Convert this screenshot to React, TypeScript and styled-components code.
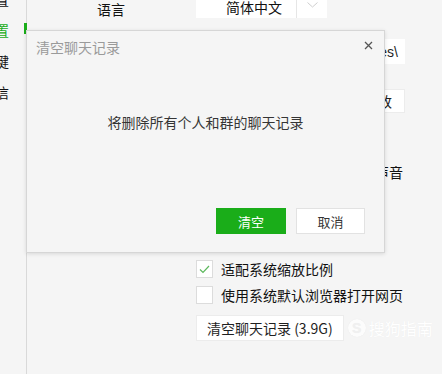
import React from "react";
import styled, { createGlobalStyle } from "styled-components";

const GlobalStyle = createGlobalStyle`
  html, body {
    margin: 0;
    padding: 0;
    background: #f5f5f5;
    overflow: hidden;
  }
  body {
    font-family: "Noto Sans CJK SC", "Microsoft YaHei", sans-serif;
    font-size: 14px;
    color: #1f1f1f;
  }
`;

const Window = styled.div`
  display: flex;
  width: 442px;
  height: 374px;
  background: #f5f5f5;
  overflow: hidden;
`;

const Sidebar = styled.div`
  position: relative;
  width: 26px;
  flex-shrink: 0;
  border-right: 1px solid #d9d9d9;
`;

const SideList = styled.div`
  display: flex;
  flex-direction: column;
  margin-top: -17px;
  overflow: hidden;
`;

const SideItem = styled.div<{ $active?: boolean }>`
  display: flex;
  justify-content: flex-end;
  align-items: center;
  height: 31px;
  padding-right: 17px;
  white-space: nowrap;
  color: ${({ $active }) => ($active ? "#1aad19" : "#111")};
`;

const ActiveMark = styled.div`
  position: absolute;
  left: 24px;
  top: 23px;
  width: 3px;
  height: 11px;
  background: #1aad19;
`;

const Main = styled.div`
  position: relative;
  flex: 1;
`;

const Content = styled.div`
  display: flex;
  flex-direction: column;
  margin-top: -10px;
`;

const Row = styled.div<{ $mt?: number; $h: number }>`
  display: grid;
  grid-template-columns: 169px 1fr;
  align-items: center;
  margin-top: ${({ $mt }) => $mt ?? 0}px;
  height: ${({ $h }) => $h}px;
`;

const Label = styled.div`
  padding: 9px 0 0 70px;
  line-height: 20px;
  color: #111;
`;

const Select = styled.div`
  display: flex;
  width: 131px;
  height: 26px;
  background: #fff;
  box-sizing: border-box;
`;

const SelectValue = styled.div`
  width: 101px;
  padding: 5px 0 0 30px;
  box-sizing: border-box;
  line-height: 20px;
  color: #111;
  border-right: 1px solid #e6e6e6;
`;

const SelectArrow = styled.div`
  flex: 1;
  display: flex;
  justify-content: center;
  padding-top: 10px;
`;

const PathBox = styled.div`
  width: 209px;
  height: 25px;
  background: #fff;
  display: flex;
  align-items: center;
  justify-content: flex-end;
  overflow: hidden;
  white-space: nowrap;
  padding-right: 7px;
  box-sizing: border-box;
  font-family: "Liberation Sans", Arial, sans-serif;
`;

const ButtonPair = styled.div`
  width: 209px;
  display: flex;
  justify-content: space-between;
`;

const PlainButton = styled.div<{ $w?: number; $h?: number }>`
  display: flex;
  align-items: center;
  justify-content: center;
  width: ${({ $w }) => ($w ? `${$w}px` : "auto")};
  height: ${({ $h }) => $h ?? 24}px;
  padding: 0 ${({ $w }) => ($w ? 0 : 10)}px;
  background: #fff;
  border: 1px solid #ececec;
  box-sizing: border-box;
  color: #1f1f1f;
  white-space: nowrap;
`;

const CheckLine = styled.label`
  display: flex;
  align-items: center;
  gap: 8px;
  white-space: nowrap;
  color: #111;
`;

const Box = styled.span`
  display: flex;
  align-items: center;
  justify-content: center;
  width: 17px;
  height: 18px;
  background: #fff;
  border: 1px solid #dcdcdc;
  box-sizing: border-box;
`;

const ClearLine = styled.div`
  display: flex;
  align-items: center;
  gap: 4px;
`;

const Watermark = styled.div`
  display: flex;
  align-items: center;
  gap: 3px;
  color: #ffffff;
  font-size: 16px;
  text-shadow: 0 0 1px rgba(0, 0, 0, 0.05);
`;

const WaterS = styled.span`
  display: flex;
  align-items: center;
  justify-content: center;
  width: 18px;
  height: 18px;
  border-radius: 50%;
  background: #fcfcfc;
  color: #f0f0f0;
  box-shadow: 0 0 1px rgba(0, 0, 0, 0.08);
  font-family: "Liberation Sans", Arial, sans-serif;
  font-weight: bold;
  font-size: 14px;
`;

/* dialog */

const Dialog = styled.div`
  position: absolute;
  left: -1px;
  top: 30px;
  width: 359px;
  height: 223px;
  box-sizing: border-box;
  display: flex;
  flex-direction: column;
  background: #f5f5f5;
  border: 1px solid #d6d6d6;
  box-shadow: 0 1px 4px rgba(0, 0, 0, 0.12);
`;

const DialogHead = styled.div`
  display: flex;
  align-items: center;
  justify-content: space-between;
  height: 32px;
  padding: 0 11px 0 9px;
`;

const DialogTitle = styled.div`
  color: #9a9a9a;
`;

const Close = styled.div`
  display: flex;
  width: 9px;
  height: 9px;
  margin-top: -4px;
`;

const Message = styled.div`
  margin-top: 49px;
  line-height: 20px;
  text-align: center;
  color: #353535;
`;

const DialogFoot = styled.div`
  margin-top: auto;
  display: flex;
  justify-content: flex-end;
  gap: 10px;
  padding: 0 19px 18px 0;
`;

const DialogButton = styled.div<{ $primary?: boolean }>`
  display: flex;
  align-items: center;
  justify-content: center;
  width: ${({ $primary }) => ($primary ? 70 : 69)}px;
  height: 26px;
  box-sizing: border-box;
  font-size: 13px;
  background: ${({ $primary }) => ($primary ? "#1aad19" : "#fff")};
  color: ${({ $primary }) => ($primary ? "#fff" : "#353535")};
  border: 1px solid ${({ $primary }) => ($primary ? "#1aad19" : "#e2e2e2")};
`;

const sideItems = ["帐号设置", "通用设置", "快捷按键", "关于微信"];

const Check = ({ on, text }: { on?: boolean; text: string }) => (
  <CheckLine>
    <Box>
      {on && (
        <svg width="11" height="9" viewBox="0 0 11 9">
          <polyline points="1,4.5 4,7.5 10,1" fill="none" stroke="#5cb85c" strokeWidth="1.2" />
        </svg>
      )}
    </Box>
    {text}
  </CheckLine>
);

export default function App() {
  return (
    <Window>
      <GlobalStyle />
      <Sidebar>
        <SideList>
          {sideItems.map((s, i) => (
            <SideItem key={s} $active={i === 1}>
              {s}
            </SideItem>
          ))}
        </SideList>
        <ActiveMark />
      </Sidebar>

      <Main>
        <Content>
          <Row $h={26}>
            <Label>语言</Label>
            <Select>
              <SelectValue>简体中文</SelectValue>
              <SelectArrow>
                <svg width="11" height="6" viewBox="0 0 11 6">
                  <polyline points="0.5,0.5 5.5,5 10.5,0.5" fill="none" stroke="#cfcfcf" strokeWidth="1" />
                </svg>
              </SelectArrow>
            </Select>
          </Row>
          <Row $mt={23} $h={25}>
            <span />
            <PathBox>C:\Users\Admin\Documents\WeChat Files\</PathBox>
          </Row>
          <Row $mt={25} $h={24}>
            <span />
            <ButtonPair>
              <PlainButton $w={90}>打开文件夹</PlainButton>
              <PlainButton $w={54}>更改</PlainButton>
            </ButtonPair>
          </Row>
          <Row $mt={49} $h={18}>
            <span />
            <Check on text="有新消息通知时播放提示声音" />
          </Row>
          <Row $mt={79} $h={18}>
            <span />
            <Check on text="适配系统缩放比例" />
          </Row>
          <Row $mt={8} $h={18}>
            <span />
            <Check text="使用系统默认浏览器打开网页" />
          </Row>
          <Row $mt={12} $h={26}>
            <span />
            <ClearLine>
              <PlainButton $h={26}>清空聊天记录 (3.9G)</PlainButton>
              <Watermark>
                <WaterS>S</WaterS>
                搜狗指南
              </Watermark>
            </ClearLine>
          </Row>
        </Content>

        <Dialog>
          <DialogHead>
            <DialogTitle>清空聊天记录</DialogTitle>
            <Close>
              <svg width="9" height="9" viewBox="0 0 9 9">
                <path d="M1 1L8 8M8 1L1 8" stroke="#555" strokeWidth="1.3" />
              </svg>
            </Close>
          </DialogHead>
          <Message>将删除所有个人和群的聊天记录</Message>
          <DialogFoot>
            <DialogButton $primary>清空</DialogButton>
            <DialogButton>取消</DialogButton>
          </DialogFoot>
        </Dialog>
      </Main>
    </Window>
  );
}
